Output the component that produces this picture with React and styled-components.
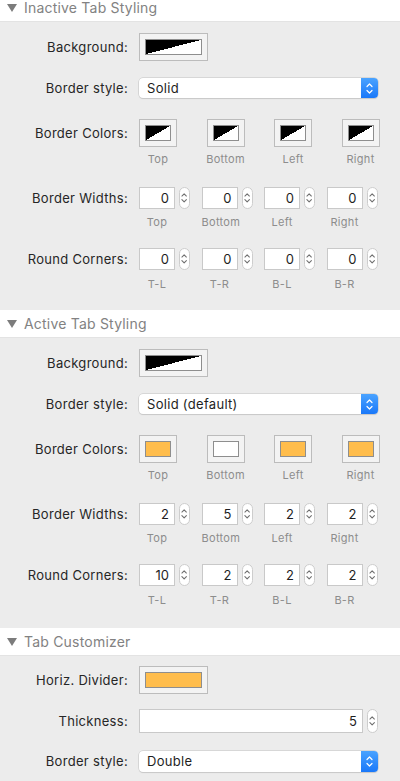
import React from 'react';
import styled, { createGlobalStyle } from 'styled-components';

const FONT = `Inter, "Noto Sans", "Liberation Sans", sans-serif`;

const GlobalStyle = createGlobalStyle`
  html, body {
    margin: 0;
    padding: 0;
    background: #ececec;
  }
  body {
    font-family: ${FONT};
    -webkit-font-smoothing: antialiased;
  }
`;

const Page = styled.div`
  width: 400px;
  overflow: hidden;
`;

// SECTION HEADER
const Header = styled.div`
  display: flex;
  align-items: center;
  gap: 7px;
  height: 28px;
  padding-left: 7px;
  margin-top: ${({ $offset }) => $offset || 0}px;
  background: #fff;
  border-bottom: 1px solid #e3e3e3;
  box-sizing: border-box;
  color: #828282;
  font-size: 14px;
  letter-spacing: 0.2px;
`;

const Triangle = () => (
  <svg width="10" height="8" viewBox="0 0 10 8">
    <polygon points="0,0 10,0 5,8" fill="#7c7c7c" />
  </svg>
);

// PANEL + ROWS
const Panel = styled.div`
  display: flex;
  flex-direction: column;
  gap: ${({ $gap }) => $gap || 20}px;
  padding: ${({ $top }) => $top || 11}px 0 ${({ $bottom }) => $bottom ?? 20}px;
  background: #ececec;
`;

const Row = styled.div`
  display: grid;
  grid-template-columns: 128px auto;
  column-gap: 11px;
  align-items: start;
`;

const Label = styled.div`
  text-align: right;
  font-size: 13px;
  letter-spacing: 0.3px;
  color: #262626;
  line-height: ${({ $h }) => $h}px;
  white-space: nowrap;
`;

const Caption = styled.div`
  margin-top: ${({ $mt }) => $mt ?? 6}px;
  font-size: 11px;
  line-height: 12px;
  color: #8d8d8d;
  text-align: center;
  letter-spacing: 0.3px;
`;

// COLOR WELL
const Well = styled.div`
  display: flex;
  align-items: center;
  justify-content: center;
  width: ${({ $wide }) => ($wide ? 69 : 38)}px;
  height: 28px;
  box-sizing: border-box;
  background: #f3f3f3;
  border: 1px solid #bcbcbc;
`;

const Swatch = styled.div`
  width: ${({ $wide }) => ($wide ? 57 : 26)}px;
  height: 16px;
  box-sizing: border-box;
  border: 1px solid #8e8e8e;
  background: ${({ $color }) =>
    $color || 'linear-gradient(to bottom right, #000 50%, #fff 50%)'};
`;

const ColorWell = ({ wide, color }) => (
  <Well $wide={wide}>
    <Swatch $wide={wide} $color={color} />
  </Well>
);

const WellSet = styled.div`
  display: flex;
  gap: 29.5px;
`;

const WellGroup = styled.div`
  display: flex;
  flex-direction: column;
  align-items: center;
  width: 38px;
`;

// POPUP SELECT
const Select = styled.div`
  display: flex;
  width: 239px;
  height: ${({ $h }) => $h || 20}px;
  box-sizing: border-box;
  background: #fff;
  border-radius: 4px;
  box-shadow: 0 0 0 0.5px #c2c2c2, 0 1px 1px rgba(0, 0, 0, 0.12);
  overflow: hidden;
`;

const SelectText = styled.div`
  flex: 1;
  padding-left: 8px;
  font-size: 13px;
  letter-spacing: 0.3px;
  color: #1e1e1e;
  line-height: ${({ $h }) => $h || 20}px;
`;

const SelectButton = styled.div`
  display: flex;
  align-items: center;
  justify-content: center;
  width: 17px;
  background: linear-gradient(#4aa3ff, #1a78f9);
`;

const Chevrons = ({ color = '#fff', size = 1 }) => (
  <svg width={7 * size} height={13 * size} viewBox="0 0 7 13">
    <polyline points="1,4.5 3.5,2 6,4.5" fill="none" stroke={color} strokeWidth="1.2" strokeLinecap="round" strokeLinejoin="round" />
    <polyline points="1,8.5 3.5,11 6,8.5" fill="none" stroke={color} strokeWidth="1.2" strokeLinecap="round" strokeLinejoin="round" />
  </svg>
);

const PopUp = ({ value, h }) => (
  <Select $h={h}>
    <SelectText $h={h}>{value}</SelectText>
    <SelectButton>
      <Chevrons />
    </SelectButton>
  </Select>
);

// NUMBER FIELD + STEPPER
const NumberSet = styled.div`
  display: flex;
  gap: 11.5px;
`;

const NumberGroup = styled.div`
  display: grid;
  grid-template-columns: ${({ $w }) => $w || 36}px 11px;
  column-gap: 4px;
`;

const Field = styled.div`
  height: ${({ $h }) => $h || 22}px;
  box-sizing: border-box;
  padding-right: 5px;
  background: #fff;
  border: 1px solid #c9c9c9;
  text-align: right;
  font-size: 13px;
  line-height: ${({ $h }) => ($h || 22) - 2}px;
  color: #1e1e1e;
`;

const Stepper = styled.div`
  display: flex;
  align-items: center;
  justify-content: center;
  height: ${({ $h }) => $h || 22}px;
  box-sizing: border-box;
  background: #fff;
  border: 1px solid #cdcdcd;
  border-radius: 6px;
`;

const NumberInput = ({ value, caption, w, h, mt }) => (
  <NumberGroup $w={w}>
    <Field $h={h}>{value}</Field>
    <Stepper $h={h}>
      <Chevrons color="#6e6e6e" size={0.9} />
    </Stepper>
    {caption && <Caption $mt={mt}>{caption}</Caption>}
  </NumberGroup>
);

const SIDES = ['Top', 'Bottom', 'Left', 'Right'];
const CORNERS = ['T-L', 'T-R', 'B-L', 'B-R'];

const TabStyling = ({ select, colors, widths, corners, bottom }) => (
  <Panel $bottom={bottom}>
    <Row>
      <Label $h={28}>Background:</Label>
      <ColorWell wide />
    </Row>
    <Row style={{ marginTop: -3 }}>
      <Label $h={20}>Border style:</Label>
      <PopUp value={select} />
    </Row>
    <Row style={{ marginTop: 1 }}>
      <Label $h={28}>Border Colors:</Label>
      <WellSet>
        {SIDES.map((side, i) => (
          <WellGroup key={side}>
            <ColorWell color={colors[i]} />
            <Caption>{side}</Caption>
          </WellGroup>
        ))}
      </WellSet>
    </Row>
    <Row style={{ marginTop: 2 }}>
      <Label $h={22}>Border Widths:</Label>
      <NumberSet>
        {SIDES.map((side, i) => (
          <NumberInput key={side} value={widths[i]} caption={side} mt={7} />
        ))}
      </NumberSet>
    </Row>
    <Row>
      <Label $h={22}>Round Corners:</Label>
      <NumberSet>
        {CORNERS.map((corner, i) => (
          <NumberInput key={corner} value={corners[i]} caption={corner} mt={8} />
        ))}
      </NumberSet>
    </Row>
  </Panel>
);

const ORANGE = '#ffbd4c';

export default function App() {
  return (
    <Page>
      <GlobalStyle />
      <Header $offset={-6}>
        <Triangle />
        Inactive Tab Styling
      </Header>
      <TabStyling
        select="Solid"
        colors={[null, null, null, null]}
        widths={[0, 0, 0, 0]}
        corners={[0, 0, 0, 0]}
      />
      <Header>
        <Triangle />
        Active Tab Styling
      </Header>
      <TabStyling
        select="Solid (default)"
        colors={[ORANGE, '#fff', ORANGE, ORANGE]}
        widths={[2, 5, 2, 2]}
        corners={[10, 2, 2, 2]}
        bottom={22}
      />
      <Header>
        <Triangle />
        Tab Customizer
      </Header>
      <Panel $top={10} $gap={15} $bottom={10}>
        <Row>
          <Label $h={28}>Horiz. Divider:</Label>
          <ColorWell wide color={ORANGE} />
        </Row>
        <Row>
          <Label $h={24}>Thickness:</Label>
          <NumberInput value={5} w={224} h={24} />
        </Row>
        <Row style={{ marginTop: 3 }}>
          <Label $h={21}>Border style:</Label>
          <PopUp value="Double" h={21} />
        </Row>
      </Panel>
    </Page>
  );
}
